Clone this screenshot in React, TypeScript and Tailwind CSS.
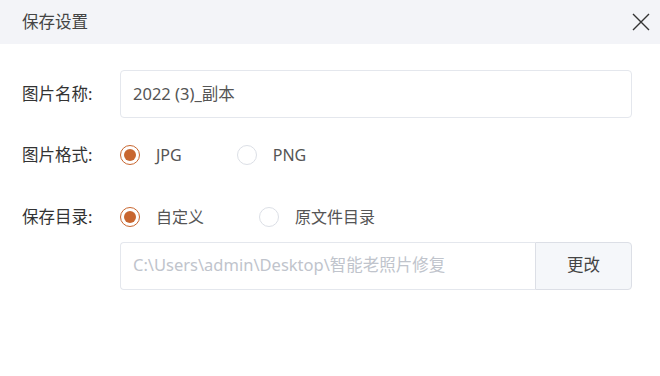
import React, { useState } from 'react';

const FONT = { fontFamily: '"Noto Sans", "Noto Sans CJK SC", sans-serif' };

function Radio({ checked, label, onClick }: { checked: boolean; label: string; onClick: () => void }) {
  return <button type="button" onClick={onClick} className="flex items-center gap-4 cursor-pointer">
      <span className={`flex h-5 w-5 items-center justify-center rounded-full border-[1.5px] ${checked ? 'border-[#c8662f]' : 'border-[#dcdfe6]'}`}>
        {checked && <span className="h-3 w-3 rounded-full bg-[#c8662f]" />}
      </span>
      <span className="text-[16px] text-[#555]">{label}</span>
    </button>;
}

export default function App() {
  const [format, setFormat] = useState('JPG');
  const [dir, setDir] = useState('custom');
  return <div className="h-[376px] w-[660px] bg-white" style={FONT}>
      <div className="flex h-11 items-center justify-between bg-[#f3f4f8] pl-[22px] pr-[7px]">
        <span className="text-[16.5px] text-[#444]">保存设置</span>
        <button type="button" className="flex h-6 w-6 items-center justify-center text-[#333]">
          <svg width="18" height="18" viewBox="0 0 18 18" fill="none" stroke="currentColor" strokeWidth="1.4">
            <path d="M1 1 L17 17 M17 1 L1 17" />
          </svg>
        </button>
      </div>

      <div className="flex flex-col pl-[22px] pr-7 pt-[26px]">
        <div className="flex items-center">
          <span className="w-[98px] text-[16.5px] text-[#333]">图片名称:</span>
          <div className="flex h-12 flex-1 items-center rounded border border-[#e4e7ed] px-3">
            <span className="text-[16.5px] text-[#555]">2022 (3)_副本</span>
          </div>
        </div>

        <div className="mt-[25px] flex items-center">
          <span className="w-[98px] text-[16.5px] text-[#333]">图片格式:</span>
          <div className="flex items-center gap-[55px]">
            <Radio checked={format === 'JPG'} label="JPG" onClick={() => setFormat('JPG')} />
            <Radio checked={format === 'PNG'} label="PNG" onClick={() => setFormat('PNG')} />
          </div>
        </div>

        <div className="mt-[37px] flex items-center">
          <span className="w-[98px] text-[16.5px] text-[#333]">保存目录:</span>
          <div className="flex items-center gap-[55px]">
            <Radio checked={dir === 'custom'} label="自定义" onClick={() => setDir('custom')} />
            <Radio checked={dir === 'origin'} label="原文件目录" onClick={() => setDir('origin')} />
          </div>
        </div>

        <div className="mt-[12px] ml-[98px] flex h-12">
          <div className="flex flex-1 items-center rounded-l border border-r-0 border-[#e4e7ed] px-3">
            <span className="text-[16.5px] text-[#c0c4cc]">C:\Users\admin\Desktop\智能老照片修复</span>
          </div>
          <button type="button" className="w-[97px] rounded-r border border-[#dcdfe6] bg-[#f5f7fa] text-[16.5px] text-[#444]">更改</button>
        </div>
      </div>
    </div>;
}
